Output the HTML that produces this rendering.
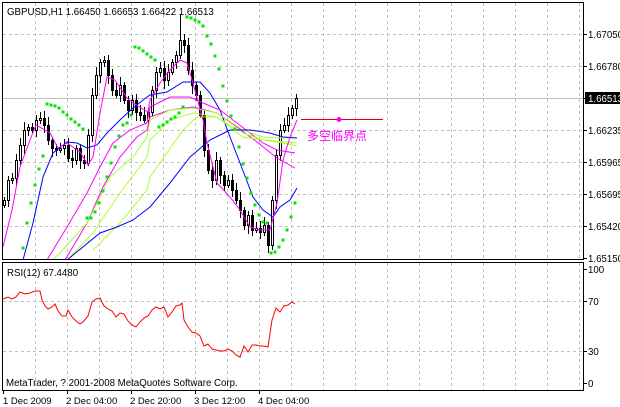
<!DOCTYPE html>
<html><head><meta charset="utf-8">
<style>
html,body{margin:0;padding:0;background:#fff;}
body{width:620px;height:407px;overflow:hidden;position:relative;font-family:"Liberation Sans","Noto Sans CJK SC",sans-serif;}
svg{position:absolute;left:0;top:0;}
</style></head><body>
<svg id="s" width="620" height="407" viewBox="0 0 620 407" xmlns="http://www.w3.org/2000/svg" font-family="Liberation Sans, Noto Sans CJK SC, sans-serif">
<defs><clipPath id="cp"><rect x="3" y="3" width="580" height="256"/></clipPath></defs>
<g id="grid" stroke="#c0c0c0" stroke-dasharray="3,3" stroke-width="1"></g>
<line x1="3" y1="98.5" x2="583" y2="98.5" stroke="#c0c0c0"/>
<g id="cdl" stroke="#000" stroke-width="1"></g>
<g clip-path="url(#cp)" fill="none" stroke-width="1">
<polyline stroke="#0000ff" points="23,260 33,223 43,177 53,153 67,142 77,143 87,148 97,145 107,133 120,120 133,108 147,97 150,95 167,92 183,82 200,82 210,93 220,110 230,137 240,163 253,197 263,210 273,217 280,207 290,200 297,188"/>
<polyline stroke="#ff00ff" points="47,260 67,227 87,193 100,167 113,143 130,130 147,123 150,107 170,97 190,97 203,103 220,110 237,123 250,133 263,143 277,150 295,153"/>
<polyline stroke="#ff00ff" points="65,260 87,223 103,187 120,157 137,137 147,130 150,117 170,110 193,107 217,113 237,127 257,142 277,158 295,168"/>
<polyline stroke="#adff2f" points="50,262 60,253 87,223 110,177 133,157 147,137 150,120 170,110 193,108 217,113 243,130 263,137 283,138 297,138"/>
<polyline stroke="#adff2f" points="70,257 93,233 120,193 147,157 150,140 170,120 193,113 217,117 243,133 263,140 297,143"/>
<polyline stroke="#adff2f" points="93,250 120,223 147,190 150,177 167,153 183,130 197,117 217,117 243,137 283,143 297,146"/>
<polyline stroke="#0000ff" points="67,260 100,233 117,227 133,220 150,207 170,183 190,157 210,140 230,130 250,130 270,133 283,137 297,138"/>
<polyline stroke="#ff00ff" points="3,247 12,210 20,167 30,140 36,125 50,133 58,148 67,143 80,152 88,165 93,157 100,113 107,77 115,80 127,98 133,103 148,112 150,100 160,83 170,70 180,60 187,63 193,83 203,120 207,143 217,183 230,197 240,210 250,227 260,230 270,230 277,203 283,160 290,137 297,120"/>
</g>
<g id="sar" fill="#00e600"></g>
<polyline fill="none" stroke="#ff0000" stroke-width="1" points="3,299 8,297 12,299 16,297 20,292 25,294 30,293 35,291 40,291 42,300 45,306 48,309 52,307 55,304 58,311 62,316 66,316 68,310 72,317 76,321 80,324 83,322 88,316 92,302 96,299 100,298 104,306 108,309 112,311 116,317 120,313 124,314 128,321 132,325 136,327 140,322 144,318 148,316 152,310 156,307 160,309 164,307 168,317 172,312 176,306 180,305 182,303 184,320 188,327 192,332 196,333 200,336 204,346 208,344 212,349 216,350 220,351 224,351 228,349 232,351 236,355 240,357 244,346 248,352 252,345 256,345 260,346 264,346 268,347 272,320 276,308 280,312 284,306 288,305 292,302 295,304"/>
<line x1="301" y1="119.5" x2="383" y2="119.5" stroke="#e00000"/>
<circle cx="339" cy="119.5" r="2.5" fill="#ff00ff"/>
<text x="307" y="140" font-size="12" fill="#ff00ff">多空临界点</text>
<rect x="2.5" y="2.5" width="581" height="257" fill="none" stroke="#000"/>
<rect x="2.5" y="262.5" width="581" height="128" fill="none" stroke="#000"/>
<text x="7" y="15" font-size="9.7" fill="#000">GBPUSD,H1  1.66450 1.66653 1.66422 1.66513</text>
<text x="7" y="276" font-size="9.7" fill="#000">RSI(12) 67.4480</text>
<text x="6" y="386" font-size="9.7" fill="#000">MetaTrader, ? 2001-2008 MetaQuotes Software Corp.</text>
<g font-size="9.7" fill="#000">
<text x="588" y="38">1.67050</text>
<text x="588" y="70">1.66780</text>
<text x="588" y="134">1.66235</text>
<text x="588" y="166">1.65965</text>
<text x="588" y="198">1.65695</text>
<text x="588" y="230">1.65420</text>
<text x="588" y="262">1.65150</text>
<text x="588" y="273">100</text>
<text x="588" y="305">70</text>
<text x="588" y="355">30</text>
<text x="588" y="387">0</text>
</g>
<rect x="585" y="92" width="35" height="12" fill="#000"/>
<text x="588" y="102" font-size="9.7" fill="#fff">1.66513</text>
<g stroke="#000">
<line x1="583" y1="34.5" x2="587" y2="34.5"/><line x1="583" y1="66.5" x2="587" y2="66.5"/><line x1="583" y1="98.5" x2="587" y2="98.5"/><line x1="583" y1="130.5" x2="587" y2="130.5"/><line x1="583" y1="162.5" x2="587" y2="162.5"/><line x1="583" y1="194.5" x2="587" y2="194.5"/><line x1="583" y1="226.5" x2="587" y2="226.5"/><line x1="583" y1="258.5" x2="587" y2="258.5"/>
<line x1="583" y1="301.5" x2="587" y2="301.5"/><line x1="583" y1="351.5" x2="587" y2="351.5"/><line x1="583" y1="383.5" x2="587" y2="383.5"/><line x1="583" y1="269.5" x2="587" y2="269.5"/>
<line x1="3.5" y1="390" x2="3.5" y2="394"/><line x1="67.5" y1="390" x2="67.5" y2="394"/><line x1="131.5" y1="390" x2="131.5" y2="394"/><line x1="195.5" y1="390" x2="195.5" y2="394"/><line x1="259.5" y1="390" x2="259.5" y2="394"/>
</g>
<g font-size="9.5" fill="#000">
<text x="3" y="404">1 Dec 2009</text>
<text x="66" y="404">2 Dec 04:00</text>
<text x="130" y="404">2 Dec 20:00</text>
<text x="194" y="404">3 Dec 12:00</text>
<text x="258" y="404">4 Dec 04:00</text>
</g>
</svg>
<script>
(function(){
var NS="http://www.w3.org/2000/svg";
function el(p,t,a){var e=document.createElementNS(NS,t);for(var k in a)e.setAttribute(k,a[k]);p.appendChild(e);return e;}
var g=document.getElementById('grid');
for(var x=35;x<583;x+=32){el(g,'line',{x1:x+.5,y1:3,x2:x+.5,y2:259});el(g,'line',{x1:x+.5,y1:263,x2:x+.5,y2:390});}
[34,66,130,162,194,226].forEach(function(y){el(g,'line',{x1:3,y1:y+.5,x2:583,y2:y+.5});});
[301,351].forEach(function(y){el(g,'line',{x1:3,y1:y+.5,x2:583,y2:y+.5});});
var c=[200,180,178,160,145,130,127,130,120,118,125,140,148,150,148,145,158,160,148,160,163,135,95,75,62,60,75,90,95,85,100,110,100,112,115,120,112,90,72,68,80,72,62,55,40,45,70,85,95,115,150,170,180,160,175,185,180,190,200,210,225,215,230,228,232,225,245,200,155,130,125,115,108,98];
var cd=document.getElementById('cdl');
for(var i=0;i<c.length;i++){
 var x=4+4*i,o=i?c[i-1]:205,cl=c[i];
 var w1=3+((i*7)%6),w2=3+((i*11)%7);
 var hi=Math.min(o,cl)-w1,lo=Math.max(o,cl)+w2;
 if(i==44)hi=14;
 el(cd,'line',{x1:x+.5,y1:hi,x2:x+.5,y2:lo});
 var t=Math.min(o,cl),b=Math.max(o,cl);
 if(b-t<1)el(cd,'line',{x1:x-1,y1:t+.5,x2:x+2,y2:t+.5});
 else el(cd,'rect',{x:x-.5,y:t+.5,width:2,height:b-t,fill:cl<o?'#fff':'#000'});
}
var s=[[23,248],[27,223],[31,203],[35,185],[39,169],[43,156],[47,104],[51,105],[55,106],[59,108],[63,112],[67,115],[71,119],[75,122],[79,125],[83,129],[87,218],[91,218],[95,212],[99,203],[103,191],[107,177],[111,163],[115,147],[119,136],[123,125],[127,123],[131,115],[135,47],[139,48],[143,51],[147,54],[151,57],[155,60],[159,127],[163,125],[167,122],[171,119],[175,117],[179,113],[183,107],[187,17],[191,18],[195,20],[199,22],[203,26],[207,36],[211,44],[215,56],[219,69],[223,86],[227,101],[231,116],[235,129],[239,147],[243,164],[247,178],[251,193],[255,205],[259,215],[263,222],[267,223],[271,253],[275,252],[279,247],[283,240],[287,230],[291,217],[295,203]];
var sr=document.getElementById('sar');
s.forEach(function(p){el(sr,'rect',{x:p[0]-1.5,y:p[1]-1.5,width:3,height:3});});
})();
</script>
</body></html>
